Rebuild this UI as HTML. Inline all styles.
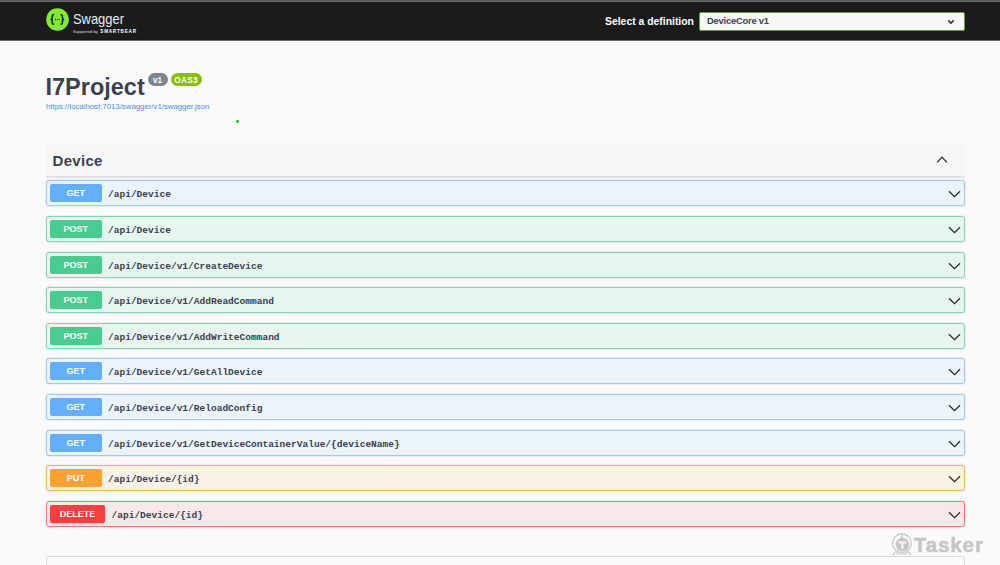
<!DOCTYPE html>
<html><head><meta charset="utf-8">
<style>
*{box-sizing:border-box;margin:0;padding:0}
html,body{width:1000px;height:565px;overflow:hidden;background:#fafafa;font-family:"Liberation Sans",sans-serif;color:#3b4151}
.abs{position:absolute}
#topline{left:0;top:0;width:1000px;height:2px;background:linear-gradient(#595a5f 0,#595a5f 1px,#6e6f73 1px)}
#topbar{left:0;top:2px;width:1000px;height:40px;background:linear-gradient(#1b1b1b 0,#1b1b1b 37px,#171717 37px,#171717 38px,#6a6a6a 38px,#6a6a6a 39px,#fff 39px)}
#logo{left:46px;top:8px}
#swtext{left:72.6px;top:10.6px;font-size:14.6px;color:#ececec;line-height:17px;letter-spacing:0;transform:scaleX(0.885);transform-origin:0 0}
#sup{left:73px;top:29px;font-size:4.2px;color:#ddd;line-height:5px;white-space:nowrap}
#sup b{margin-left:1.2px;font-size:4.6px;letter-spacing:0.8px;font-weight:700;color:#fff}
#seltitle{left:604.5px;top:14px;transform:scaleX(0.92);transform-origin:0 0;font-size:11.3px;font-weight:700;color:#fff;line-height:14px;white-space:nowrap}
#select{left:699px;top:11.5px;width:266px;height:19.5px;border:1.5px solid #62a03f;border-radius:2px;background:#f7f7f7}
#selchev{left:947.2px;top:18.6px}
#seltext{left:707px;top:15.2px;letter-spacing:-0.22px;font-size:9.4px;font-weight:700;color:#3b4151;line-height:12px;white-space:nowrap}
#title{left:45.5px;top:72.5px;font-size:23.5px;font-weight:700;color:#3b4151;line-height:28px;white-space:nowrap}
.badge{height:12.5px;border-radius:7px;color:#fff;font-size:8.2px;font-weight:700;line-height:16.3px;text-align:center}
#v1{left:147.5px;top:73px;width:20px;background:#7d8492}
#oas{left:170.5px;top:73px;width:31px;background:#89bf04;letter-spacing:0.35px;text-indent:0.35px}
#url{left:46px;top:101.5px;font-size:7.8px;color:#4990e2;line-height:10px;white-space:nowrap}
#dot{left:236.2px;top:119.8px;width:2.8px;height:2.8px;border-radius:50%;background:#10d010}
#tag{left:46px;top:144px;width:919px;height:33.8px;background:#f7f7f7;border-bottom:2px solid #e2e3e5}
#tagt{left:52.6px;top:152.1px;letter-spacing:0.3px;font-size:15px;font-weight:700;color:#3b4151;line-height:18px}
.op{left:46px;width:919px;height:26px;border:1px solid;border-radius:3px;box-shadow:0 0 2px rgba(0,0,0,.19)}
.get{background:#ebf3fb;border-color:#9ccaf6}
.post{background:#e6f5ee;border-color:#7dd8ae}
.put{background:#faf2e6;border-color:#f2b462}
.del{background:#f9e8e8;border-color:#f67a78}
.m{position:absolute;left:3px;top:3px;width:51.7px;height:18px;border-radius:2px;color:#fff;font-size:9px;font-weight:700;line-height:19.8px;text-align:center}
.get .m{background:#61affe}
.post .m{background:#49cc90}
.put .m{background:#fca130}
.del .m{background:#f93e3e;width:55px}
.p{position:absolute;left:61px;top:6.6px;font-family:"Liberation Mono",monospace;font-size:9.54px;font-weight:700;color:#3b4151;line-height:14px;white-space:nowrap}
.del .p{left:64.5px}
.chev{position:absolute;left:901.2px;top:9.3px}
#schemas{left:46px;top:556px;width:919px;height:30px;border:1px solid #d9dadc;border-radius:2px}
#tagchev{left:935.8px;top:156.2px}
#taskicon{left:890.5px;top:532.5px}
#tasker{left:913.8px;top:532.9px;font-size:20.5px;font-weight:700;color:#c6c6c6;line-height:24px;white-space:nowrap;letter-spacing:0.9px;-webkit-text-stroke:0.5px #c6c6c6}
</style></head><body>
<div id="topline" class="abs"></div>
<div id="topbar" class="abs"></div>
<svg id="logo" class="abs" width="23" height="23" viewBox="0 0 23 23"><circle cx="11.5" cy="11.5" r="11.3" fill="#85ea2d"/><path d="M8.2 6.5 Q6.2 6.5 6.2 8.4 L6.2 10 Q6.2 11.5 4.4 11.5 Q6.2 11.5 6.2 13 L6.2 14.4 Q6.2 16.3 8.2 16.3" fill="none" stroke="#173647" stroke-width="1.7"/><path d="M14.4 6.5 Q16.4 6.5 16.4 8.4 L16.4 10 Q16.4 11.5 18.2 11.5 Q16.4 11.5 16.4 13 L16.4 14.4 Q16.4 16.3 14.4 16.3" fill="none" stroke="#173647" stroke-width="1.7"/><circle cx="9.3" cy="11.5" r="0.65" fill="#173647"/><circle cx="11.3" cy="11.5" r="0.65" fill="#173647"/><circle cx="13.3" cy="11.5" r="0.65" fill="#173647"/></svg>
<div id="swtext" class="abs">Swagger</div>
<div id="sup" class="abs">Supported by <b>SMARTBEAR</b></div>
<div id="seltitle" class="abs">Select a definition</div>
<div id="select" class="abs"></div>
<div id="seltext" class="abs">DeviceCore v1</div>
<svg id="selchev" class="abs" width="8" height="6" viewBox="0 0 8 6"><polyline points="1.3,1.4 4,4.1 6.7,1.4" fill="none" stroke="#303030" stroke-width="1.5"/></svg>
<div id="title" class="abs">I7Project</div>
<div id="v1" class="abs badge">v1</div>
<div id="oas" class="abs badge">OAS3</div>
<div id="url" class="abs">https://localhost:7013/swagger/v1/swagger.json</div>
<div id="dot" class="abs"></div>
<div id="tag" class="abs"></div>
<div id="tagt" class="abs">Device</div>

<div class="abs op get" style="top:180px"><div class="m">GET</div><div class="p">/api/Device</div><svg class="chev" width="13" height="8" viewBox="0 0 13 8"><polyline points="1,1.2 6.5,6.6 12,1.2" fill="none" stroke="#2b2b2b" stroke-width="1.3"/></svg></div>
<div class="abs op post" style="top:216px"><div class="m">POST</div><div class="p">/api/Device</div><svg class="chev" width="13" height="8" viewBox="0 0 13 8"><polyline points="1,1.2 6.5,6.6 12,1.2" fill="none" stroke="#2b2b2b" stroke-width="1.3"/></svg></div>
<div class="abs op post" style="top:252px"><div class="m">POST</div><div class="p">/api/Device/v1/CreateDevice</div><svg class="chev" width="13" height="8" viewBox="0 0 13 8"><polyline points="1,1.2 6.5,6.6 12,1.2" fill="none" stroke="#2b2b2b" stroke-width="1.3"/></svg></div>
<div class="abs op post" style="top:287px"><div class="m">POST</div><div class="p">/api/Device/v1/AddReadCommand</div><svg class="chev" width="13" height="8" viewBox="0 0 13 8"><polyline points="1,1.2 6.5,6.6 12,1.2" fill="none" stroke="#2b2b2b" stroke-width="1.3"/></svg></div>
<div class="abs op post" style="top:323px"><div class="m">POST</div><div class="p">/api/Device/v1/AddWriteCommand</div><svg class="chev" width="13" height="8" viewBox="0 0 13 8"><polyline points="1,1.2 6.5,6.6 12,1.2" fill="none" stroke="#2b2b2b" stroke-width="1.3"/></svg></div>
<div class="abs op get" style="top:358px"><div class="m">GET</div><div class="p">/api/Device/v1/GetAllDevice</div><svg class="chev" width="13" height="8" viewBox="0 0 13 8"><polyline points="1,1.2 6.5,6.6 12,1.2" fill="none" stroke="#2b2b2b" stroke-width="1.3"/></svg></div>
<div class="abs op get" style="top:394px"><div class="m">GET</div><div class="p">/api/Device/v1/ReloadConfig</div><svg class="chev" width="13" height="8" viewBox="0 0 13 8"><polyline points="1,1.2 6.5,6.6 12,1.2" fill="none" stroke="#2b2b2b" stroke-width="1.3"/></svg></div>
<div class="abs op get" style="top:430px"><div class="m">GET</div><div class="p">/api/Device/v1/GetDeviceContainerValue/{deviceName}</div><svg class="chev" width="13" height="8" viewBox="0 0 13 8"><polyline points="1,1.2 6.5,6.6 12,1.2" fill="none" stroke="#2b2b2b" stroke-width="1.3"/></svg></div>
<div class="abs op put" style="top:465px"><div class="m">PUT</div><div class="p">/api/Device/{id}</div><svg class="chev" width="13" height="8" viewBox="0 0 13 8"><polyline points="1,1.2 6.5,6.6 12,1.2" fill="none" stroke="#2b2b2b" stroke-width="1.3"/></svg></div>
<div class="abs op del" style="top:501px"><div class="m">DELETE</div><div class="p">/api/Device/{id}</div><svg class="chev" width="13" height="8" viewBox="0 0 13 8"><polyline points="1,1.2 6.5,6.6 12,1.2" fill="none" stroke="#2b2b2b" stroke-width="1.3"/></svg></div>

<svg id="tagchev" class="abs" width="13" height="8" viewBox="0 0 13 8"><polyline points="1,6.4 6,1.3 11,6.4" fill="none" stroke="#333" stroke-width="1.3"/></svg>
<div id="schemas" class="abs"></div>
<svg id="taskicon" class="abs" width="23" height="24" viewBox="0 0 23 24"><circle cx="10.9" cy="10.2" r="9.3" fill="none" stroke="#c6c6c6" stroke-width="1.3"/><circle cx="11.4" cy="11.4" r="6.7" fill="#c6c6c6"/><path d="M7.6 8.3 H15.2 V10.6 H12.6 V15.8 H10.2 V10.6 H7.6 Z" fill="#f4f4f4"/><rect x="10.1" y="1" width="1.6" height="5.5" fill="#c6c6c6"/><path d="M1.8 21.8 L4.6 18.4 M20 21.8 L17.2 18.4" stroke="#c6c6c6" stroke-width="1.2"/><path d="M5 19.5 Q11 23 17 19.5" fill="none" stroke="#c6c6c6" stroke-width="1.1"/></svg>
<div id="tasker" class="abs">Tasker</div>
</body></html>
